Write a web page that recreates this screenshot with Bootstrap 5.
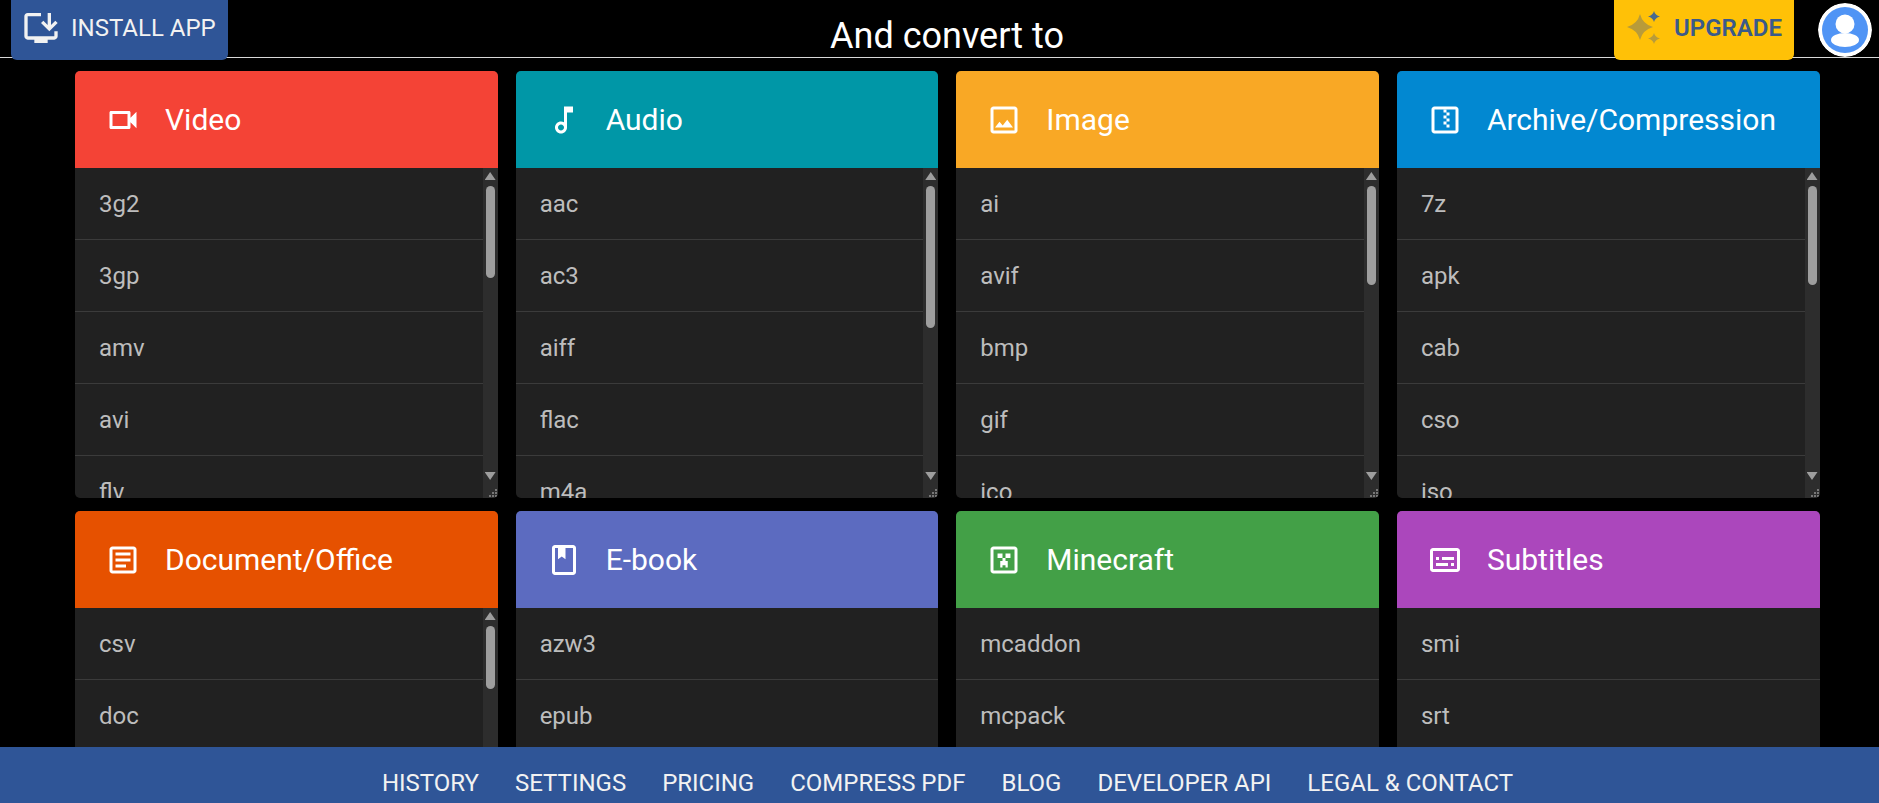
<!DOCTYPE html>
<html lang="en">
<head>
  <meta charset="UTF-8" />
  <meta name="viewport" content="width=device-width, initial-scale=1.0"/>
  <title>And convert to</title>
  <link href="https://cdn.jsdelivr.net/npm/bootstrap@5.3.3/dist/css/bootstrap.min.css" rel="stylesheet" />
  <style>
    html, body { height: 100%; }
    body {
      font-family: Roboto, "Liberation Sans", sans-serif;
      background-color: #000;
      overflow: hidden;
    }
    .top-bar {
      height: 58px;
      flex: none;
      border-bottom: 1px solid #d8d8d8;
      padding: 0 7px 0 11px;
    }
    .top-title {
      font-size: 36px;
      line-height: 72px;
      color: #fff;
      white-space: nowrap;
      margin-left: 11px;
    }
    .side-slot { width: 380px; flex: none; }
    .btn-install, .btn-upgrade {
      height: 60px;
      border-radius: 0 0 6px 6px;
      font-size: 24px;
      border: 0;
      padding: 0 0 5px;
      white-space: nowrap;
    }
    .btn-install { width: 217px; background: #2f5597; color: #f2f2f2; padding-left: 10px; gap: 10px; }
    .btn-upgrade { width: 180px; background: #ffc107; color: #3b5a8a; font-weight: 600; margin-right: 24px; padding-left: 13px; gap: 14px; }
    .btn-install:hover { background: #2f5597; color: #f2f2f2; }
    .btn-upgrade:hover { background: #ffc107; color: #3b5a8a; }
    .avatar-ring { width: 54px; height: 54px; margin-top: 3px; border-radius: 50%; }

    .format-grid {
      display: grid;
      width: 1744.5px;
      grid-template-columns: repeat(4, 1fr);
      column-gap: 18px;
      row-gap: 13px;
      margin: 13px 0 0 75px;
    }
    .format-card { border-radius: 5px; overflow: hidden; height: 427px; background: #212121; }
    .format-head {
      height: 97px;
      padding-left: 30px;
      color: #fff;
      font-size: 30px;
      line-height: 1;
    }
    .format-head svg { width: 36px; height: 36px; margin-right: 24px; flex: none; fill: #fff; }
    .bg-video { background: #f44336; }
    .bg-audio { background: #0097a7; }
    .bg-image { background: #f9a825; }
    .bg-archive { background: #0288d1; }
    .bg-document { background: #e65100; }
    .bg-ebook { background: #5c6bc0; }
    .bg-minecraft { background: #43a047; }
    .bg-subtitles { background: #ab47bc; }

    .format-body { height: 330px; overflow: hidden; }
    .format-list { margin: 0; padding: 0; list-style: none; min-width: 0; }
    .format-list li {
      height: 72px;
      line-height: 73px;
      padding-left: 24px;
      font-size: 24px;
      color: #bdbdbd;
      border-bottom: 1px solid #3b3b3b;
    }

    /* drawn scrollbar, headless hides the real one */
    .fake-scroll {
      width: 15px;
      flex: none;
      background: #2d2d2d;
      padding: 4px 2px 0;
    }
    .arrow-up, .arrow-down {
      width: 11px;
      height: 8px;
      flex: none;
      background: #9e9e9e;
    }
    .arrow-up { clip-path: polygon(50% 0, 100% 100%, 0 100%); margin-bottom: 6px; }
    .arrow-down { clip-path: polygon(0 0, 100% 0, 50% 100%); margin-bottom: 9px; }
    .scroll-track { flex: 1 1 0; min-height: 0; padding: 0 1px; }
    .scroll-thumb { background: #9e9e9e; border-radius: 5px; }
    .scroll-grip {
      flex: none;
      width: 15px;
      height: 9px;
      margin: 0 -2px;
      display: block;
    }

    .bottom-bar {
      height: 56px;
      flex: none;
      background: #2f5597;
      gap: 36px;
      padding-top: 16px;
      padding-left: 16px;
    }
    .bottom-bar a {
      color: #f2f2f2;
      font-size: 24px;
      line-height: 1;
      text-decoration: none;
      white-space: nowrap;
    }
  </style>
</head>
<body class="d-flex flex-column">

  <!-- Top bar -->
  <header class="top-bar d-flex justify-content-between align-items-start">
    <div class="side-slot d-flex">
      <button type="button" class="btn btn-install d-flex align-items-center">
        <svg width="40" height="40" viewBox="0 0 24 24" fill="#f2f2f2"><path d="M20 17H4V5h8V3H4c-1.110 0-2 .89-2 2v12c0 1.100.89 2 2 2h4v2h8v-2h4c1.100 0 2-.9 2-2v-3h-2v3z"/><path d="M17 14l5-5-1.410-1.410L18 10.170V3h-2v7.170l-2.590-2.580L12 9l5 5z"/></svg>
        INSTALL APP
      </button>
    </div>
    <div class="top-title">And convert to</div>
    <div class="side-slot d-flex justify-content-end">
      <button type="button" class="btn btn-upgrade d-flex align-items-center">
        <svg width="33" height="33" viewBox="0 0 33 33"><path fill="#b89b3a" d="M13 3Q15.500 13 26 16 15.500 19 13 29 10.500 19 0 16 10.500 13 13 3z"/><path fill="#4a6a8f" d="M27 0Q28.200 4.200 33 5.500 28.200 6.800 27 11 25.800 6.800 21 5.500 25.800 4.200 27 0z"/><path fill="#b89b3a" d="M27 22Q28.200 26.200 33 27.500 28.200 28.800 27 33 25.800 28.800 21 27.500 25.800 26.200 27 22z"/></svg>
        UPGRADE
      </button>
      <svg class="avatar-ring" viewBox="0 0 54 54"><circle cx="27" cy="27" r="27" fill="#fff"/><circle cx="27" cy="27" r="23" fill="#5094f5"/><circle cx="27" cy="21" r="9.500" fill="#fff"/><ellipse cx="27" cy="37" rx="14" ry="7" fill="#fff"/></svg>
    </div>
  </header>

  <!-- Format cards -->
  <main class="flex-grow-1 overflow-hidden">
    <div class="format-grid" id="grid"></div>
  </main>

  <!-- Footer links -->
  <footer class="bottom-bar d-flex justify-content-center align-items-center">
    <a href="#">HISTORY</a>
    <a href="#">SETTINGS</a>
    <a href="#">PRICING</a>
    <a href="#">COMPRESS PDF</a>
    <a href="#">BLOG</a>
    <a href="#">DEVELOPER API</a>
    <a href="#">LEGAL &amp; CONTACT</a>
  </footer>

  <script src="https://cdn.jsdelivr.net/npm/bootstrap@5.3.3/dist/js/bootstrap.bundle.min.js"></script>
  <script>
    const box = '<path fill-rule="evenodd" d="M19 3H5c-1.100 0-2 .9-2 2v14c0 1.100.9 2 2 2h14c1.100 0 2-.9 2-2V5c0-1.100-.9-2-2-2zm0 2v14H5V5h14z"/>';
    // thumb is the scrollbar thumb height in px, 0 means no scrollbar
    const formats = [
      { name: "Video", cls: "bg-video", thumb: 92,
        icon: '<path d="M15 8v8H5V8h10m1-2H4c-.55 0-1 .45-1 1v10c0 .55.45 1 1 1h12c.55 0 1-.45 1-1v-3.500l4 4v-11l-4 4V7c0-.55-.45-1-1-1z"/>',
        items: "3g2 3gp amv avi flv" },
      { name: "Audio", cls: "bg-audio", thumb: 142,
        icon: '<path d="M12 3v10.550c-.59-.34-1.270-.55-2-.55-2.210 0-4 1.790-4 4s1.790 4 4 4 4-1.790 4-4V7h4V3h-6zm-2 16c-1.100 0-2-.9-2-2s.9-2 2-2 2 .9 2 2-.9 2-2 2z"/>',
        items: "aac ac3 aiff flac m4a" },
      { name: "Image", cls: "bg-image", thumb: 99,
        icon: box + '<path d="M14.140 11.860l-3 3.870L9 13.140 6 17h12l-3.860-5.140z"/>',
        items: "ai avif bmp gif ico" },
      { name: "Archive/Compression", cls: "bg-archive", thumb: 99,
        icon: box + '<path d="M11 5h2v2h-2zM13 7h2v2h-2zM11 9h2v2h-2zM13 11h2v2h-2zM11 13h2v2h-2zM13 15h2v2h-2z"/>',
        items: "7z apk cab cso iso" },
      { name: "Document/Office", cls: "bg-document", thumb: 63,
        icon: box + '<path d="M14 17H7v-2h7v2zm3-4H7v-2h10v2zm0-4H7V7h10v2z"/>',
        items: "csv doc" },
      { name: "E-book", cls: "bg-ebook", thumb: 0,
        icon: '<path d="M18 2H6c-1.100 0-2 .9-2 2v16c0 1.100.9 2 2 2h12c1.100 0 2-.9 2-2V4c0-1.100-.9-2-2-2zm0 18H6V4h2v7.500l2.500-1.800 2.500 1.800V4h5v16z"/>',
        items: "azw3 epub" },
      { name: "Minecraft", cls: "bg-minecraft", thumb: 0,
        icon: box + '<path d="M7.700 7.700H11v3H7.700zM13 7.700h3.300v3H13zM11 10.700h2v2h1.500v4.300H13v-1.500h-2V17H9.500v-4.300H11z"/>',
        items: "mcaddon mcpack" },
      { name: "Subtitles", cls: "bg-subtitles", thumb: 0,
        icon: '<path d="M20 4H4c-1.100 0-2 .9-2 2v12c0 1.100.9 2 2 2h16c1.100 0 2-.9 2-2V6c0-1.100-.9-2-2-2zm0 14H4V6h16v12zM6 10h2v2H6zm0 4h8v2H6zm10 0h2v2h-2zm-6-4h8v2h-8z"/>',
        items: "smi srt" }
    ];

    const grip = '<svg class="scroll-grip" viewBox="0 0 15 9" fill="#777"><path d="M12 0h2v2h-2zM9 3h2v2H9zM12 3h2v2h-2zM6 6h2v2H6zM9 6h2v2H9zM12 6h2v2h-2z"/></svg>';

    function scrollbar(thumb) {
      if (!thumb) return "";
      return `<div class="fake-scroll d-flex flex-column">
        <div class="arrow-up"></div>
        <div class="scroll-track"><div class="scroll-thumb" style="height:${thumb}px"></div></div>
        <div class="arrow-down"></div>
        ${grip}
      </div>`;
    }

    document.getElementById("grid").innerHTML = formats.map((f) => `
      <section class="format-card">
        <div class="format-head d-flex align-items-center ${f.cls}">
          <svg viewBox="0 0 24 24">${f.icon}</svg><span>${f.name}</span>
        </div>
        <div class="format-body d-flex">
          <ul class="format-list flex-grow-1">${f.items.split(" ").map((i) => `<li>${i}</li>`).join("")}</ul>
          ${scrollbar(f.thumb)}
        </div>
      </section>`).join("");
  </script>
</body>
</html>
